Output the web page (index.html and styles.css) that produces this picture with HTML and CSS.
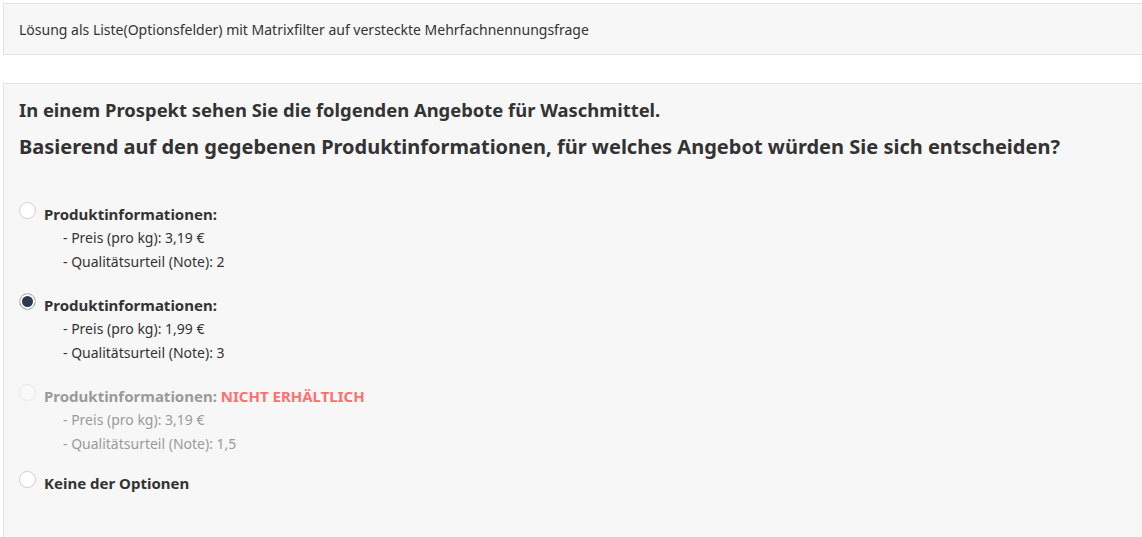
FILE: index.html
```html
<!DOCTYPE html>
<html lang="de">
<head>
	<meta charset="UTF-8">
	<title>Matrixfilter</title>
	<link rel="stylesheet" href="styles.css">
</head>
<body>
	<div class="panel intro">
		<p>Lösung als Liste(Optionsfelder) mit Matrixfilter auf versteckte Mehrfachnennungsfrage</p>
	</div>

	<div class="panel question">
		<p class="lead">In einem Prospekt sehen Sie die folgenden Angebote für Waschmittel.</p>
		<p class="ask">Basierend auf den gegebenen Produktinformationen, für welches Angebot würden Sie sich entscheiden?</p>

		<ul class="options">
			<li class="option">
				<span class="radio"></span>
				<div class="label">
					<b>Produktinformationen:</b>
					<span class="line">- Preis (pro kg): 3,19 €</span>
					<span class="line">- Qualitätsurteil (Note): 2</span>
				</div>
			</li>
			<li class="option">
				<span class="radio on"></span>
				<div class="label">
					<b>Produktinformationen:</b>
					<span class="line">- Preis (pro kg): 1,99 €</span>
					<span class="line">- Qualitätsurteil (Note): 3</span>
				</div>
			</li>
			<li class="option off">
				<span class="radio"></span>
				<div class="label">
					<b>Produktinformationen: <em>NICHT ERHÄLTLICH</em></b>
					<span class="line">- Preis (pro kg): 3,19 €</span>
					<span class="line">- Qualitätsurteil (Note): 1,5</span>
				</div>
			</li>
			<li class="option">
				<span class="radio"></span>
				<div class="label">
					<b>Keine der Optionen</b>
				</div>
			</li>
		</ul>
	</div>
</body>
</html>
```

FILE: styles.css
```css
* {
	margin: 0;
	padding: 0;
	box-sizing: border-box;
}
body {
	margin: 3px 0 0 3px;
	font-family: "Noto Sans", "Open Sans", sans-serif;
	color: #333;
	background: #fff;
	overflow: hidden;
}
.panel {
	background: #f7f7f7;
	border: 1px solid #e3e3e3;
	border-right: none;
}
.intro {
	height: 52px;
	padding: 0 15px;
	display: flex;
	align-items: center;
	font-size: 14px;
	color: #333;
}
.question {
	margin-top: 28px;
	padding: 13px 15px 0;
	height: 454px;
	border-bottom: none;
}
.lead {
	font-size: 18.4px;
	font-weight: bold;
	line-height: 26px;
}
.ask {
	font-size: 20px;
	font-weight: bold;
	line-height: 30px;
	margin-top: 9px;
}
.options {
	list-style: none;
	margin-top: 40px;
}
.option {
	display: flex;
	gap: 8px;
	margin-bottom: 19px;
}
.option.off {
	margin-bottom: 15px;
}
.radio {
	flex: none;
	width: 17px;
	height: 17px;
	border-radius: 50%;
	border: 1px solid #cfcfcf;
	background: #fff;
}
.radio.on {
	background: #2c3a4f;
	box-shadow: inset 0 0 0 2px #fff;
}
.label {
	display: flex;
	flex-direction: column;
	font-size: 14px;
	line-height: 24px;
}
.label b {
	font-size: 15px;
}
.label em {
	font-style: normal;
	color: #ff6f6f;
}
.line {
	padding-left: 19px;
}
.off {
	color: #9a9a9a;
}
.off .radio {
	border-color: #e6e6e6;
	background: #f9f9f9;
}
```
